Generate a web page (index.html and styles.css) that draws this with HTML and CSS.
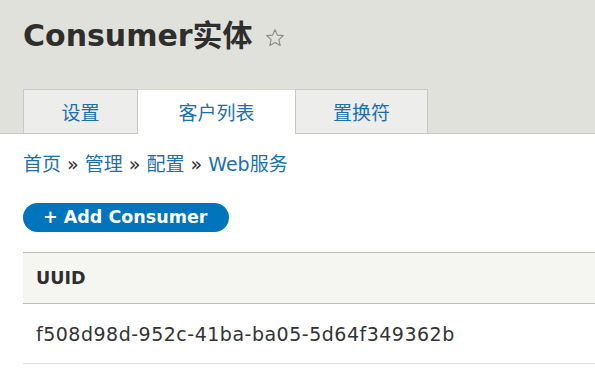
FILE: index.html
```html
<!DOCTYPE html>
<html lang="zh">
<head>
    <meta charset="UTF-8">
    <title>Consumer实体</title>
    <link rel="stylesheet" href="styles.css">
</head>
<body>
    <div class="header">
        <h1 class="page-title">Consumer实体
            <svg class="star" width="20" height="20" viewBox="0 0 18 18">
                <path d="M9 1.5l2.2 4.9 5.3.5-4 3.6 1.2 5.3L9 13.1l-4.7 2.7 1.2-5.3-4-3.6 5.3-.5z" fill="none" stroke="#8a8a86" stroke-width="1" stroke-linejoin="round"/>
            </svg>
        </h1>
        <ul class="tabs">
            <li><a href="#">设置</a></li>
            <li class="active"><a href="#">客户列表</a></li>
            <li><a href="#">置换符</a></li>
        </ul>
    </div>

    <div class="content">
        <div class="breadcrumb">
            <a href="#">首页</a> » <a href="#">管理</a> » <a href="#">配置</a> » <a href="#">Web服务</a>
        </div>

        <a class="button" href="#">+ Add Consumer</a>

        <table class="list">
            <thead>
                <tr><th>UUID</th></tr>
            </thead>
            <tbody>
                <tr><td>f508d98d-952c-41ba-ba05-5d64f349362b</td></tr>
            </tbody>
        </table>
    </div>
</body>
</html>
```

FILE: styles.css
```css
body {
    margin: 0;
    font-family: "DejaVu Sans", "Noto Sans CJK SC", sans-serif;
    color: #333;
    background: #fff;
    overflow: hidden;
}

.header {
    background-color: #e1e1dc;
    padding: 17px 0 0 23px;
    border-bottom: 1px solid #c9c9c4;
}

.page-title {
    margin: 0;
    font-size: 30px;
    font-weight: bold;
    color: #2e2e2c;
    line-height: 38px;
    height: 72px;
}

.star {
    vertical-align: -2px;
    margin-left: 2px;
}

.tabs {
    list-style: none;
    margin: 0;
    padding: 0;
    display: flex;
}

.tabs li {
    margin-bottom: -1px;
}

.tabs a {
    display: block;
    height: 43px;
    line-height: 43px;
    text-align: center;
    font-size: 19px;
    color: #1a70b0;
    text-decoration: none;
    background-color: #ededeb;
    border: 1px solid #c9c9c4;
    font-family: "Noto Sans CJK SC", sans-serif;
}

.tabs li:nth-child(1) a {
    width: 113px;
}

.tabs li:nth-child(2) a {
    width: 157px;
    border-width: 1px 0 0 0;
    border-color: #d8d8d4;
    background-color: #fff;
    height: 44px;
}

.tabs li:nth-child(3) a {
    width: 131px;
}

.content {
    padding: 18px 0 0 23px;
}

.breadcrumb {
    font-size: 19px;
    color: #333;
    line-height: 24px;
}

.breadcrumb a {
    color: #1a70b0;
    text-decoration: none;
}

.button {
    display: inline-block;
    margin-top: 27px;
    height: 29px;
    line-height: 29px;
    padding: 0 22px 0 20px;
    border-radius: 15px;
    background-color: #0074bd;
    color: #fff;
    font-size: 17.5px;
    font-weight: bold;
    text-decoration: none;
}

.list {
    margin-top: 20px;
    width: 600px;
    border-collapse: collapse;
}

.list th {
    text-align: left;
    background-color: #f5f5f2;
    border-top: 1px solid #bfbfba;
    border-bottom: 1px solid #bfbfba;
    height: 50px;
    padding: 0 13px;
    font-size: 17.5px;
    color: #2e2e2c;
}

.list td {
    height: 59px;
    padding: 0 13px;
    font-size: 19px;
    letter-spacing: 0.5px;
    color: #333;
    border-bottom: 1px solid #e0e0dc;
}
```
